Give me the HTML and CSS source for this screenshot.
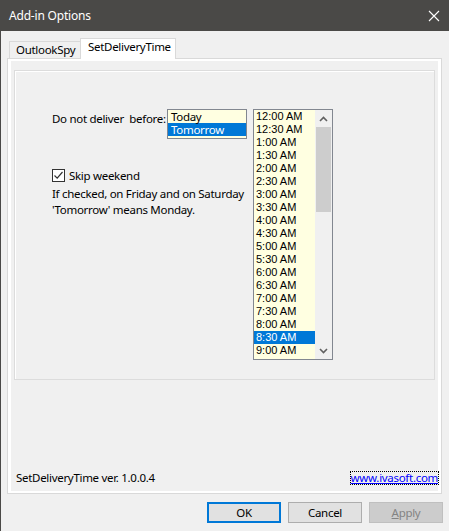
FILE: index.html
```html
<!DOCTYPE html>
<html>
<head>
<meta charset="utf-8">
<link rel="stylesheet" href="styles.css">
</head>
<body>
<div class="window">
  <div class="titlebar">
    <span class="title">Add-in Options</span>
    <svg class="close" width="12" height="12" viewBox="0 0 12 12"><path d="M1 1 L11 11 M11 1 L1 11" stroke="#ffffff" stroke-width="1.1" fill="none"/></svg>
  </div>
  <div class="tabstrip">
    <div class="tab">OutlookSpy</div>
    <div class="tab active">SetDeliveryTime</div>
  </div>
  <div class="panel">
    <div class="page">
      <div class="group">
        <div class="leftcol">
          <div class="row1">
            <span class="label">Do not deliver&nbsp; before:</span>
            <div class="listbox small">
              <div class="item">Today</div>
              <div class="item sel">Tomorrow</div>
            </div>
          </div>
          <div class="checkrow">
            <span class="checkbox"><svg width="11" height="11" viewBox="0 0 11 11"><path d="M1.5 5.5 L4.2 8.2 L9.5 2" stroke="#333" stroke-width="1.2" fill="none"/></svg></span>
            <span>Skip weekend</span>
          </div>
          <p class="note">If checked, on Friday and on Saturday<br>'Tomorrow' means Monday.</p>
        </div>
        <div class="listbox times">
          <div class="items">
            <div class="titem">12:00 AM</div>
            <div class="titem">12:30 AM</div>
            <div class="titem">1:00 AM</div>
            <div class="titem">1:30 AM</div>
            <div class="titem">2:00 AM</div>
            <div class="titem">2:30 AM</div>
            <div class="titem">3:00 AM</div>
            <div class="titem">3:30 AM</div>
            <div class="titem">4:00 AM</div>
            <div class="titem">4:30 AM</div>
            <div class="titem">5:00 AM</div>
            <div class="titem">5:30 AM</div>
            <div class="titem">6:00 AM</div>
            <div class="titem">6:30 AM</div>
            <div class="titem">7:00 AM</div>
            <div class="titem">7:30 AM</div>
            <div class="titem">8:00 AM</div>
            <div class="titem sel">8:30 AM</div>
            <div class="titem">9:00 AM</div>
          </div>
          <div class="scrollbar">
            <div class="arrow"><svg width="9" height="6" viewBox="0 0 9 6"><path d="M1 5 L4.5 1.5 L8 5" stroke="#606060" stroke-width="1.6" fill="none"/></svg></div>
            <div class="thumb"></div>
            <div class="track"></div>
            <div class="arrow"><svg width="9" height="6" viewBox="0 0 9 6"><path d="M1 1 L4.5 4.5 L8 1" stroke="#606060" stroke-width="1.6" fill="none"/></svg></div>
          </div>
        </div>
      </div>
      <div class="footer">
        <span>SetDeliveryTime ver. 1.0.0.4</span>
        <a class="link">www.ivasoft.com</a>
      </div>
    </div>
  </div>
  <div class="buttons">
    <div class="btn default">OK</div>
    <div class="btn">Cancel</div>
    <div class="btn disabled"><u>A</u>pply</div>
  </div>
</div>
</body>
</html>
```
FILE: styles.css
```css
* { box-sizing: border-box; }
html, body { margin: 0; padding: 0; }
body {
  font-family: "Noto Sans", "Open Sans", sans-serif;
  font-size: 11.5px;
  letter-spacing: -0.3px;
  color: #000;
  background: #f0f0f0;
}
.window {
  width: 449px;
  height: 531px;
  border-left: 1px solid #4a4947;
  background: #f0f0f0;
  display: flex;
  flex-direction: column;
}
.titlebar {
  height: 31px;
  background: #4a4947;
  color: #fff;
  display: flex;
  align-items: center;
  justify-content: space-between;
  padding: 0 8px 0 9px;
  margin-left: -1px;
}
.title { font-size: 12px; line-height: 16px; letter-spacing: -0.2px; }
.close { display: block; margin-right: 1px; }
.tabstrip {
  margin-top: 7px;
  margin-left: 8px;
  height: 20px;
  display: flex;
  align-items: flex-end;
}
.tab {
  height: 17px;
  width: 71px;
  border: 1px solid #d9d9d9;
  border-bottom: none;
  border-right: none;
  padding-left: 6px;
  line-height: 15px;
  white-space: nowrap;
}
.tab.active {
  position: relative;
  z-index: 1;
  height: 21px;
  width: 96px;
  margin-bottom: -1px;
  background: #fff;
  border-right: 1px solid #d9d9d9;
  padding-left: 7px;
  line-height: 16px;
}
.panel {
  margin-left: 6px;
  width: 435px;
  height: 436px;
  border: 1px solid #d9d9d9;
  background: #fff;
  padding: 2px 3px 2px 3px;
}
.page {
  height: 100%;
  background: #f0f0f0;
  display: flex;
  flex-direction: column;
  padding-top: 1px;
}
.group {
  margin: 8px 3px 0 3px;
  height: 310px;
  border: 1px solid #dcdcdc;
  box-shadow: inset 1px 1px 0 #ffffff;
  padding: 38px 0 0 37px;
  display: flex;
  align-items: flex-start;
}
.leftcol { width: 195px; flex: none; }
.row1 { display: flex; align-items: flex-start; }
.label { flex: 1; padding-top: 2px; line-height: 16px; white-space: nowrap; }
.listbox {
  border: 1px solid #828790;
  background: #ffffe1;
}
.listbox.small { width: 80px; height: 30px; flex: none; }
.item { height: 13px; line-height: 13px; padding-left: 3px; }
.sel { background: #0078d7; color: #fff; }
.checkrow {
  margin-top: 29px;
  display: flex;
  align-items: center;
  height: 14px;
}
.checkbox {
  width: 13px;
  height: 13px;
  border: 1px solid #333;
  background: #fff;
  display: flex;
  align-items: center;
  justify-content: center;
  margin-right: 4px;
}
.checkbox svg { display: block; }
.note { margin: 4px 0 0 0; line-height: 16px; white-space: nowrap; }
.listbox.times {
  width: 80px;
  height: 251px;
  margin-left: 6px;
  flex: none;
  display: flex;
  overflow: hidden;
}
.items {
  flex: 1;
  font-family: "Liberation Sans", Arial, sans-serif;
  font-size: 11px;
  letter-spacing: 0;
}
.titem { height: 13px; line-height: 13px; padding-left: 2px; }
.scrollbar {
  width: 17px;
  flex: none;
  background: #f0f0f0;
  display: flex;
  flex-direction: column;
}
.arrow {
  height: 17px;
  display: flex;
  align-items: center;
  justify-content: center;
}
.arrow svg { display: block; }
.thumb { height: 85px; background: #cdcdcd; margin: 0 1px; }
.track { flex: 1; }
.footer {
  margin-top: auto;
  margin-bottom: 6px;
  display: flex;
  justify-content: space-between;
  align-items: center;
  padding-left: 5px;
  line-height: 14px;
}
.link {
  color: #0000ff;
  text-decoration: underline;
  outline: 1px dotted #000;
  outline-offset: -1px;
  padding: 0 1px;
  margin-right: -1px;
}
.buttons {
  margin-top: 8px;
  display: flex;
  justify-content: flex-end;
  gap: 7px;
  padding-right: 6px;
}
.btn {
  width: 74px;
  height: 21px;
  border: 1px solid #adadad;
  background: #e1e1e1;
  display: flex;
  align-items: center;
  justify-content: center;
  line-height: 14px;
}
.btn.default { border: 2px solid #0078d7; }
.btn.disabled { background: #cccccc; border-color: #bfbfbf; color: #838383; }
```
